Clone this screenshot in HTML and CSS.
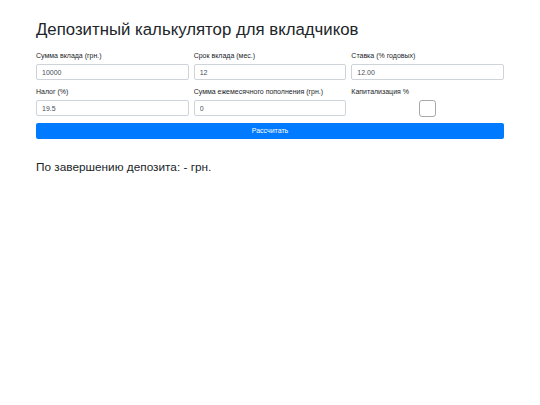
FILE: index.html
```html
<!DOCTYPE html>
<html lang="ru">
<head>
<meta charset="utf-8">
<title>Депозитный калькулятор</title>
<link rel="stylesheet" href="styles.css">
</head>
<body>
<div class="container">
  <h1 class="title">Депозитный калькулятор для вкладчиков</h1>
  <form class="form">
    <div class="grid">
      <div class="field">
        <label class="label">Сумма вклада (грн.)</label>
        <input class="input" type="text" value="10000">
      </div>
      <div class="field">
        <label class="label">Срок вклада (мес.)</label>
        <input class="input" type="text" value="12">
      </div>
      <div class="field">
        <label class="label">Ставка (% годовых)</label>
        <input class="input" type="text" value="12.00">
      </div>
      <div class="field">
        <label class="label">Налог (%)</label>
        <input class="input" type="text" value="19.5">
      </div>
      <div class="field">
        <label class="label">Сумма ежемесячного пополнения (грн.)</label>
        <input class="input" type="text" value="0">
      </div>
      <div class="field">
        <label class="label">Капитализация %</label>
        <div class="check-wrap"><span class="checkbox"></span></div>
      </div>
    </div>
    <button type="button" class="btn">Рассчитать</button>
  </form>
  <p class="result">По завершению депозита: - грн.</p>
</div>
</body>
</html>
```
FILE: styles.css
```css
html, body {
  margin: 0;
  padding: 0;
  background: #fff;
}
body {
  font-family: "Liberation Sans", Arial, sans-serif;
  color: #212529;
}
.container {
  width: 468px;
  padding: 19px 36px 0;
}
.title {
  font-size: 16.8px;
  line-height: 22px;
  font-weight: 400;
  margin: 0 0 9px;
  color: #212529;
}
.form {
  margin: 0;
}
.grid {
  display: grid;
  grid-template-columns: repeat(3, 1fr);
  column-gap: 5px;
  row-gap: 6px;
}
.field {
  display: flex;
  flex-direction: column;
}
.label {
  font-size: 7px;
  line-height: 12px;
  height: 12px;
  margin-bottom: 2px;
  color: #212529;
}
.input {
  box-sizing: border-box;
  height: 16px;
  width: 100%;
  margin: 0;
  border: 1px solid #ced4da;
  border-radius: 2px;
  padding: 0 5px;
  font-family: "Liberation Sans", Arial, sans-serif;
  font-size: 7px;
  color: #495057;
  background: #fff;
  outline: none;
}
.check-wrap {
  height: 16px;
  display: flex;
  justify-content: center;
  align-items: center;
}
.checkbox {
  box-sizing: border-box;
  width: 17px;
  height: 17px;
  border: 1px solid #a8a8a8;
  border-radius: 3px;
  background: #fff;
}
.btn {
  display: block;
  box-sizing: border-box;
  width: 100%;
  height: 16px;
  margin-top: 7px;
  padding: 0;
  border: 0;
  border-radius: 2px;
  background: #007bff;
  color: #fff;
  font-family: "Liberation Sans", Arial, sans-serif;
  font-size: 7px;
  line-height: 16px;
  text-align: center;
}
.result {
  font-size: 11.8px;
  line-height: 14px;
  margin: 21px 0 0;
  color: #212529;
}
```
